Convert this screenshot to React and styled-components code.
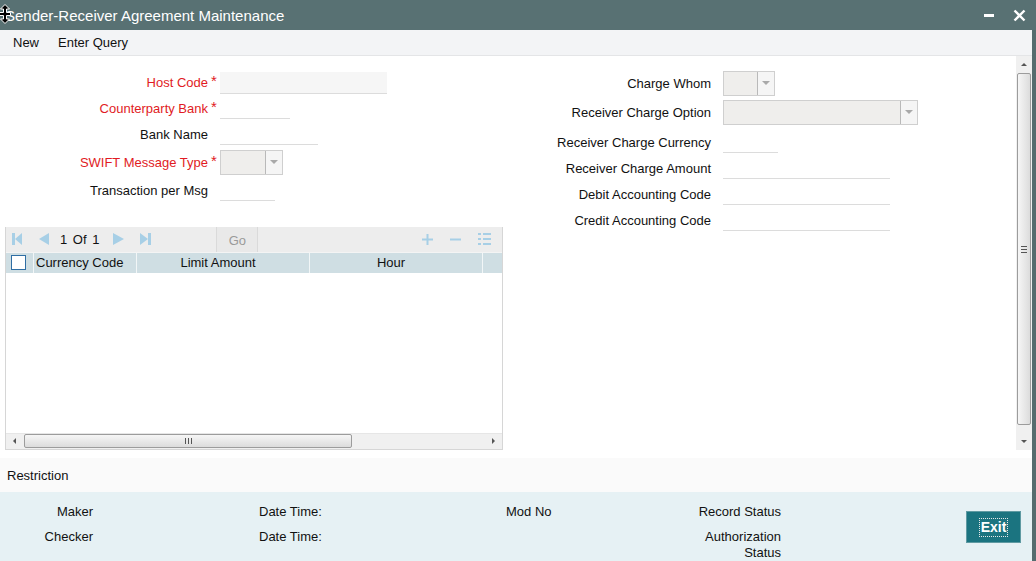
import React from 'react'
import styled, { createGlobalStyle } from 'styled-components'

const Global = createGlobalStyle`
  html, body { margin: 0; padding: 0; background: #ffffff; }
  body { font-family: "Liberation Sans", Arial, sans-serif; font-size: 13px; color: #111; }
  * { box-sizing: border-box; }
`

const Window = styled.div`
  width: 1036px;
  height: 561px;
  display: flex;
  flex-direction: column;
  overflow: hidden;
  background: #fff;
`

const TitleBar = styled.div`
  position: relative;
  height: 30px;
  flex: none;
  background: #587173;
  color: #fff;
  display: flex;
  align-items: center;
  padding: 0 0 0 5px;
  font-size: 15px;
  h1 {
    font-size: 15px;
    font-weight: normal;
    margin: 0;
    flex: 1;
  }
`

const Cursor = styled.svg`
  position: absolute;
  left: -1px;
  top: 4px;
`

const WinButtons = styled.div`
  display: flex;
  align-items: center;
  gap: 18px;
  padding-right: 10px;
`

const Body = styled.div`
  flex: 1;
  display: flex;
  flex-direction: column;
  border-right: 4px solid #566c6e;
  min-height: 0;
`

const MenuBar = styled.div`
  height: 26px;
  flex: none;
  background: #f3f4f6;
  border-bottom: 1px solid #e4e5e7;
  display: flex;
  align-items: center;
  gap: 19px;
  padding-left: 13px;
  span { color: #111; }
`

const Content = styled.div`
  height: 394px;
  flex: none;
  display: flex;
`

const Main = styled.div`
  flex: 1;
  display: flex;
  padding-top: 14px;
`

const LeftCol = styled.div`
  width: 520px;
  display: flex;
  flex-direction: column;
`

const RightCol = styled.div`
  display: flex;
  flex-direction: column;
`

const Row = styled.div`
  height: ${p => p.$h || 26}px;
  display: flex;
  align-items: center;
  line-height: 16px;
`

const Label = styled.label`
  width: ${p => p.$w}px;
  text-align: right;
  color: ${p => (p.$req ? '#e11b24' : '#111')};
  white-space: nowrap;
  padding-top: 1px;
`

const Star = styled.span`
  width: 12px;
  padding-left: 3px;
  color: #e11b24;
  font-size: 15px;
  line-height: 16px;
  margin-top: -3px;
`

const Field = styled.div`
  width: ${p => p.$w}px;
  height: ${p => p.$filled ? 22 : 21}px;
  background: ${p => (p.$filled ? '#f6f6f6' : 'transparent')};
  border-bottom: 1px solid #dcdcdc;
`

const Select = styled.div`
  width: ${p => p.$w}px;
  height: 25px;
  display: flex;
  background: #efeeec;
  border: 1px solid #cfcfcf;
  .btn {
    margin-left: auto;
    width: 17px;
    height: 100%;
    background: #f5f5f5;
    border-left: 1px solid #b9b9b9;
    display: flex;
    align-items: center;
    justify-content: center;
  }
`

const Grid = styled.div`
  margin: 23px 0 0 5px;
  width: 498px;
  height: 224px;
  display: flex;
  flex-direction: column;
  border: 1px solid #d6d6d6;
  border-top: none;
`

const GridToolbar = styled.div`
  height: 25px;
  flex: none;
  background: #ededed;
  display: flex;
  align-items: center;
  padding-left: 5px;
`

const Pager = styled.div`
  display: flex;
  align-items: center;
  .count { margin: 0 14px 0 0; color: #111; word-spacing: 2px; }
`

const PagerIcon = styled.span`
  display: inline-flex;
  align-items: center;
  margin-right: ${p => p.$mr || 0}px;
`

const IconBtn = styled.span`
  display: inline-flex;
  align-items: center;
  justify-content: center;
  width: ${p => p.$w || 27}px;
`

const GoButton = styled.div`
  margin-left: 65px;
  width: 42px;
  height: 25px;
  background: #e9e9e9;
  border: 1px solid #dadada;
  border-top: none;
  border-bottom: none;
  color: #9a9a9a;
  display: flex;
  align-items: center;
  justify-content: center;
  padding-top: 2px;
`

const ToolRight = styled.div`
  margin-left: auto;
  display: flex;
  align-items: center;
  padding-right: 3px;
`

const HeaderRow = styled.div`
  height: 21px;
  flex: none;
  display: flex;
  background: #cfdee3;
  border-top: 1px solid #f4f4f4;
`

const HeadCell = styled.div`
  width: ${p => p.$w}px;
  flex: none;
  display: flex;
  align-items: center;
  justify-content: ${p => (p.$left ? 'flex-start' : 'center')};
  padding-left: ${p => (p.$left ? 2 : 0)}px;
  padding-right: ${p => (p.$left ? 0 : 10)}px;
  border-right: 1px solid #f2f6f7;
  color: #111;
  &:last-child { border-right: none; flex: 1; }
`

const CheckBox = styled.span`
  width: 15px;
  height: 15px;
  background: #fff;
  border: 1px solid #2f6ea4;
  margin-left: 3px;
`

const GridBody = styled.div`
  flex: 1;
  background: #fff;
`

const HScroll = styled.div`
  height: 16px;
  flex: none;
  display: flex;
  align-items: center;
  background: #f0f0f0;
  border-top: 1px solid #e6e6e6;
  .arrow {
    width: 17px;
    display: flex;
    justify-content: center;
  }
  .thumb {
    width: 328px;
    height: 14px;
    margin-left: 1px;
    border: 1px solid #9c9c9c;
    border-radius: 2px;
    background: linear-gradient(#f6f6f6, #dcdcdc);
    display: flex;
    align-items: center;
    justify-content: center;
  }
  .track { flex: 1; }
`

const VScroll = styled.div`
  width: 16px;
  flex: none;
  display: flex;
  flex-direction: column;
  align-items: center;
  background: #f0f0f0;
  .arrow {
    height: 17px;
    display: flex;
    align-items: center;
    justify-content: center;
  }
  .thumb {
    width: 14px;
    height: 352px;
    border: 1px solid #9c9c9c;
    border-radius: 2px;
    background: linear-gradient(90deg, #f6f6f6, #dcdcdc);
    display: flex;
    align-items: center;
    justify-content: center;
  }
  .track { flex: 1; }
`

const Restriction = styled.div`
  margin-top: 8px;
  height: 34px;
  flex: none;
  background: #fafafa;
  display: flex;
  align-items: center;
  padding-left: 7px;
`

const Footer = styled.div`
  flex: 1;
  background: #e6f1f4;
  display: flex;
  align-items: flex-start;
`

const Audit = styled.div`
  display: grid;
  grid-template-columns: 93px 166px 247px 120px 155px;
  grid-auto-rows: 16px;
  row-gap: 9px;
  padding-top: 12px;
  line-height: 16px;
  .r { text-align: right; }
`

const ExitButton = styled.button`
  margin: 19px 11px 0 auto;
  width: 55px;
  height: 32px;
  background: #1b7480;
  border: 1px solid #5f9aa2;
  color: #fff;
  font-family: "Liberation Sans", Arial, sans-serif;
  font-size: 14px;
  font-weight: bold;
  display: flex;
  align-items: center;
  justify-content: center;
  padding: 0;
  span {
    border: 1px dotted #e8e8e8;
    padding: 0 1px;
    line-height: 17px;
  }
`

const blue = '#a7cfe6'

const Tri = ({ dir = 'down', color = '#888', size = 4 }) => {
  const pts = {
    down: `0,0 ${size * 2},0 ${size},${size}`,
    up: `0,${size} ${size * 2},${size} ${size},0`,
    left: `${size},0 ${size},${size * 2} 0,${size}`,
    right: `0,0 0,${size * 2} ${size},${size}`,
  }[dir]
  const w = dir === 'up' || dir === 'down' ? size * 2 : size
  const h = dir === 'up' || dir === 'down' ? size : size * 2
  return (
    <svg width={w} height={h}>
      <polygon points={pts} fill={color} />
    </svg>
  )
}

function FormRow({ label, req, w, h, children }) {
  return (
    <Row $h={h}>
      <Label $w={w} $req={req}>{label}</Label>
      <Star>{req ? '*' : ''}</Star>
      {children}
    </Row>
  )
}

function SelectBox({ w }) {
  return (
    <Select $w={w}>
      <div className="btn"><Tri dir="down" color="#a9a9a9" size={4} /></div>
    </Select>
  )
}

export default function App() {
  return (
    <Window>
      <Global />
      <TitleBar>
        <h1>Sender-Receiver Agreement Maintenance</h1>
        <Cursor width="12" height="20" viewBox="0 0 12 20">
          <path d="M6 0.5 L10.5 5 L7.5 5 L7.5 8.5 L11.5 8.5 L11.5 11.5 L7.5 11.5 L7.5 15 L10.5 15 L6 19.5 L1.5 15 L4.5 15 L4.5 11.5 L0.5 11.5 L0.5 8.5 L4.5 8.5 L4.5 5 L1.5 5 Z" fill="#000" stroke="#fff" strokeWidth="1" />
        </Cursor>
        <WinButtons>
          <svg width="11" height="12"><rect x="0" y="5" width="10" height="3" fill="#fff" /></svg>
          <svg width="13" height="13" viewBox="0 0 13 13"><path d="M1.5 1.5 L11.5 11.5 M11.5 1.5 L1.5 11.5" stroke="#fff" strokeWidth="2.4" /></svg>
        </WinButtons>
      </TitleBar>
      <Body>
        <MenuBar>
          <span>New</span>
          <span>Enter Query</span>
        </MenuBar>
        <Content>
          <Main>
            <LeftCol>
              <FormRow label="Host Code" req w={208}><Field $w={167} $filled /></FormRow>
              <FormRow label="Counterparty Bank" req w={208}><Field $w={70} /></FormRow>
              <FormRow label="Bank Name" w={208}><Field $w={98} /></FormRow>
              <FormRow label="SWIFT Message Type" req w={208} h={29}><SelectBox w={63} /></FormRow>
              <FormRow label="Transaction per Msg" w={208} h={27}><Field $w={55} /></FormRow>
              <Grid>
                <GridToolbar>
                  <Pager>
                    <PagerIcon $mr={17} style={{ marginLeft: 1 }}>
                      <svg width="10" height="12"><rect x="0" y="0" width="3" height="12" fill={blue} /><polygon points="10,0 10,12 3,6" fill={blue} /></svg>
                    </PagerIcon>
                    <PagerIcon $mr={11}>
                      <svg width="10" height="12"><polygon points="10,0 10,12 0,6" fill={blue} /></svg>
                    </PagerIcon>
                    <span className="count">1 Of 1</span>
                    <PagerIcon $mr={16}>
                      <svg width="11" height="12"><polygon points="0,0 0,12 11,6" fill={blue} /></svg>
                    </PagerIcon>
                    <PagerIcon>
                      <svg width="11" height="12"><polygon points="0,0 0,12 8,6" fill={blue} /><rect x="8" y="0" width="3" height="12" fill={blue} /></svg>
                    </PagerIcon>
                  </Pager>
                  <GoButton>Go</GoButton>
                  <ToolRight>
                    <IconBtn $w={28}>
                      <svg width="11" height="11"><path d="M5.5 0 V11 M0 5.5 H11" stroke={blue} strokeWidth="2" /></svg>
                    </IconBtn>
                    <IconBtn $w={28}>
                      <svg width="11" height="11"><path d="M0 5.5 H11" stroke={blue} strokeWidth="2" /></svg>
                    </IconBtn>
                    <IconBtn $w={30}>
                      <svg width="13" height="12">
                        <rect x="0" y="0" width="3" height="2" fill={blue} /><rect x="5" y="0" width="8" height="2" fill={blue} />
                        <rect x="0" y="5" width="3" height="2" fill={blue} /><rect x="5" y="5" width="8" height="2" fill={blue} />
                        <rect x="0" y="10" width="3" height="2" fill={blue} /><rect x="5" y="10" width="8" height="2" fill={blue} />
                      </svg>
                    </IconBtn>
                  </ToolRight>
                </GridToolbar>
                <HeaderRow>
                  <HeadCell $w={28} $left><CheckBox /></HeadCell>
                  <HeadCell $w={103} $left>Currency Code</HeadCell>
                  <HeadCell $w={173}>Limit Amount</HeadCell>
                  <HeadCell $w={173}>Hour</HeadCell>
                  <HeadCell $w={20} />
                </HeaderRow>
                <GridBody />
                <HScroll>
                  <div className="arrow"><Tri dir="left" color="#555" size={3} /></div>
                  <div className="thumb">
                    <svg width="7" height="6"><path d="M0.5 0 V6 M3.5 0 V6 M6.5 0 V6" stroke="#555" strokeWidth="1" /></svg>
                  </div>
                  <div className="track" />
                  <div className="arrow"><Tri dir="right" color="#555" size={3} /></div>
                </HScroll>
              </Grid>
            </LeftCol>
            <RightCol>
              <FormRow label="Charge Whom" w={191}><SelectBox w={52} /></FormRow>
              <FormRow label="Receiver Charge Option" w={191} h={32}><SelectBox w={195} /></FormRow>
              <FormRow label="Receiver Charge Currency" w={191} h={28}><Field $w={55} /></FormRow>
              <FormRow label="Receiver Charge Amount" w={191} h={25}><Field $w={167} /></FormRow>
              <FormRow label="Debit Accounting Code" w={191}><Field $w={167} /></FormRow>
              <FormRow label="Credit Accounting Code" w={191}><Field $w={167} /></FormRow>
            </RightCol>
          </Main>
          <VScroll>
            <div className="arrow"><Tri dir="up" color="#555" size={3} /></div>
            <div className="thumb">
              <svg width="6" height="7"><path d="M0 0.5 H6 M0 3.5 H6 M0 6.5 H6" stroke="#555" strokeWidth="1" /></svg>
            </div>
            <div className="track" />
            <div className="arrow"><Tri dir="down" color="#555" size={3} /></div>
          </VScroll>
        </Content>
        <Restriction>Restriction</Restriction>
        <Footer>
          <Audit>
            <span className="r">Maker</span>
            <span />
            <span>Date Time:</span>
            <span>Mod No</span>
            <span className="r">Record Status</span>
            <span className="r">Checker</span>
            <span />
            <span>Date Time:</span>
            <span />
            <span className="r">Authorization<br />Status</span>
          </Audit>
          <ExitButton><span>Exit</span></ExitButton>
        </Footer>
      </Body>
    </Window>
  )
}
